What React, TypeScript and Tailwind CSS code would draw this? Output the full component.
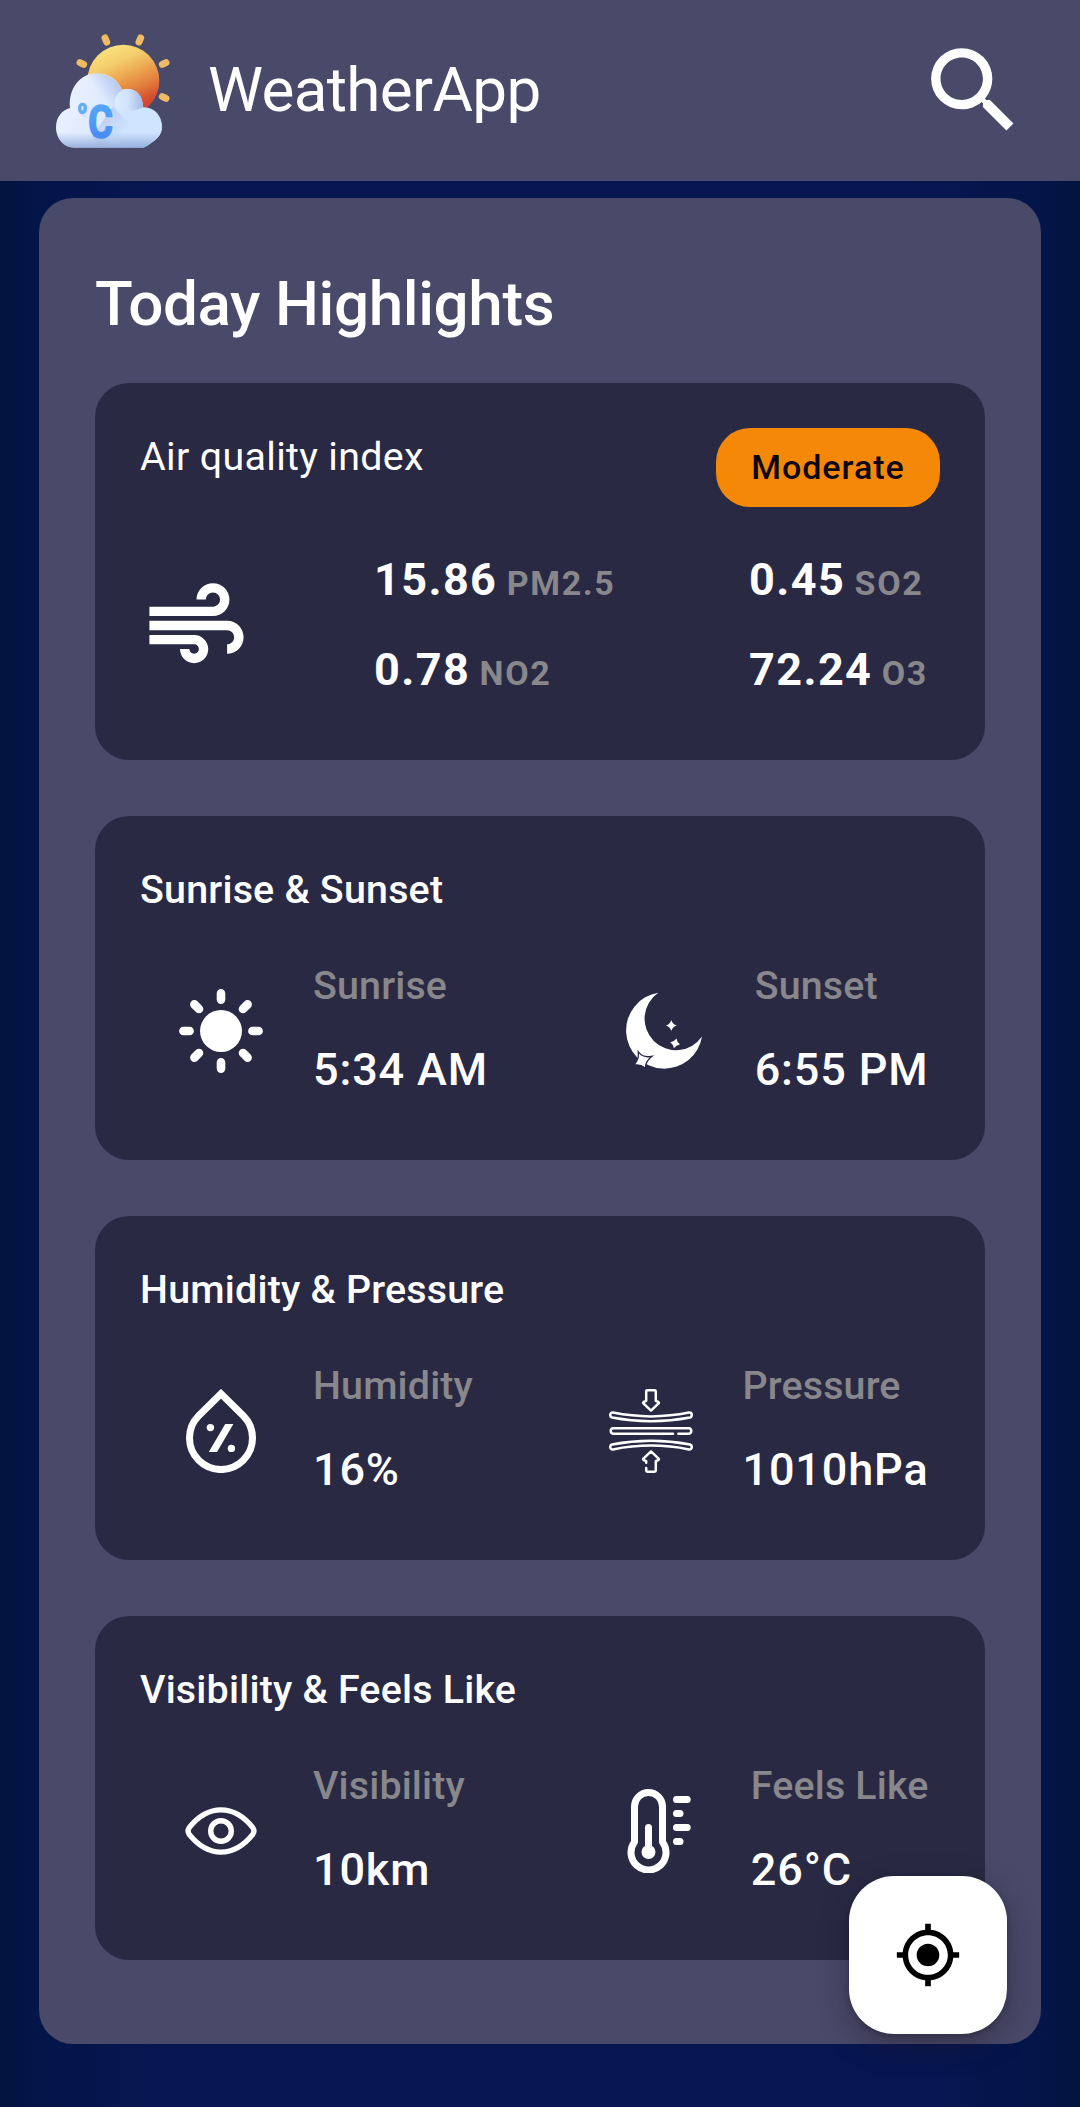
import type { ReactNode } from 'react';
import { MdAir, MdMyLocation, MdSearch } from 'react-icons/md';

function Logo() {
  return (
    <svg className="h-[114px] w-[114px] shrink-0" viewBox="48 40 342 342">
      <defs>
        <linearGradient id="sun" x1="0.2" y1="0.05" x2="0.62" y2="1">
          <stop offset="0" stopColor="#fae47e" />
          <stop offset="0.25" stopColor="#f4cd6c" />
          <stop offset="0.5" stopColor="#eba04a" />
          <stop offset="0.68" stopColor="#e17d3c" />
          <stop offset="0.85" stopColor="#d6502f" />
          <stop offset="1" stopColor="#cf3f2c" />
        </linearGradient>
        <linearGradient id="cloud" x1="0" y1="0" x2="1" y2="0.3">
          <stop offset="0" stopColor="#f0f3ff" />
          <stop offset="0.5" stopColor="#e0ebff" />
          <stop offset="1" stopColor="#c6e2ff" />
        </linearGradient>
        <linearGradient id="lobe" x1="0.55" y1="0.4" x2="0.95" y2="0.1">
          <stop offset="0" stopColor="#aebfe8" stopOpacity="0" />
          <stop offset="1" stopColor="#a3b8e6" stopOpacity="0.85" />
        </linearGradient>
        <linearGradient id="puff" x1="0" y1="0" x2="1" y2="0">
          <stop offset="0" stopColor="#dcebff" />
          <stop offset="0.45" stopColor="#d3e3fb" />
          <stop offset="1" stopColor="#a2b9e8" />
        </linearGradient>
        <linearGradient id="base" x1="0" y1="0" x2="0" y2="1">
          <stop offset="0" stopColor="#9db6e4" stopOpacity="0" />
          <stop offset="1" stopColor="#93acdd" stopOpacity="0.95" />
        </linearGradient>
        <linearGradient id="cast" x1="0" y1="0" x2="0.8" y2="0.6">
          <stop offset="0" stopColor="#9fb3de" stopOpacity="0.75" />
          <stop offset="1" stopColor="#9fb3de" stopOpacity="0" />
        </linearGradient>
        <linearGradient id="degree" x1="0" y1="0" x2="0" y2="1">
          <stop offset="0" stopColor="#58b0f6" />
          <stop offset="1" stopColor="#4582f4" />
        </linearGradient>
        <clipPath id="cloudShape">
          <path d="M103 381C72 381 48 354 48 320C48 290 66 268 90 262C84 205 120 158 170 158C205 158 232 176 246 207C280 198 309 216 309 260C341 258 366 284 366 318C366 345 345 362 311 381Z" />
        </clipPath>
      </defs>
      <g stroke="#f0bb62" strokeWidth="21" strokeLinecap="round">
        <path d="M195 52l5 12M302 52l-5 12M120 126l11 5M378 126l-11 5M378 233l-11-5" />
      </g>
      <circle cx="250" cy="180" r="108" fill="url(#sun)" />
      <g clipPath="url(#cloudShape)">
        <rect x="40" y="150" width="340" height="240" fill="url(#cloud)" />
        <circle cx="170" cy="240" r="82" fill="url(#lobe)" />
        <circle cx="267" cy="247" r="43" fill="url(#puff)" />
        <path d="M309 261a58 58 0 0 1 57 58v40H225v-97c20 18 50 10 84-1z" fill="#cfe4ff" />
        <path d="M218 258L278 318L240 381H184L156 348Z" fill="url(#cast)" />
        <path d="M118 278L150 304V262L140 250Z" fill="url(#cast)" />
        <rect x="40" y="334" width="340" height="48" fill="url(#base)" />
      </g>
      <rect x="119.5" y="251" width="16" height="24" rx="8" fill="none" stroke="#62aef5" strokeWidth="10" />
      <text
        transform="translate(145 352) scale(.82 1)"
        fontFamily="Roboto, sans-serif"
        fontWeight="700"
        fontSize="138"
        fill="url(#degree)"
        stroke="url(#degree)"
        strokeWidth="5"
        strokeLinejoin="round"
      >
        C
      </text>
    </svg>
  );
}

const icon = 'h-[84px] w-[84px] shrink-0';

function SunIcon() {
  return (
    <svg className={icon} viewBox="0 0 84 84" fill="#fff">
      <circle cx="42" cy="42" r="21" />
      <path
        d="M42 4.4v6.2M42 73.4v6.2M4.4 42h6.2M73.4 42h6.2M15.4 15.4l4.6 4.6M64 64l4.6 4.6M68.6 15.4L64 20M20 64l-4.6 4.6"
        stroke="#fff"
        strokeWidth="8.6"
        strokeLinecap="round"
      />
    </svg>
  );
}

function MoonIcon() {
  return (
    <svg className={icon} viewBox="0 0 84 84" fill="#fff">
      <path d="M37.3 3.7A38.2 38.2 0 1 0 81 47.6A31.5 31.5 0 1 1 37.3 3.7z" />
      <path d="M50.3 31Q51.5 35.3 55.8 36.5Q51.5 37.7 50.3 42Q49.1 37.7 44.8 36.5Q49.1 35.3 50.3 31z" />
      <g stroke="#292944" strokeWidth="1.9" paintOrder="stroke">
        <path d="M55.5 49.4Q56 53.1 58.9 55.2Q55.2 56 52.9 59.2Q52.4 55.6 49.3 53.3Q53.1 52.7 55.5 49.4z" />
      </g>
      <g stroke="#292944" strokeWidth="2.6" paintOrder="stroke">
        <path d="M18 64.6Q22 69.2 28.9 68.2Q24.2 72.2 23.8 78Q20 74.6 14.2 75.3Q18.4 71 18 64.6z" />
      </g>
    </svg>
  );
}

function HumidityIcon() {
  return (
    <svg className={icon} viewBox="0 0 84 84" fill="#fff">
      <path d="M42 4.8L19.7 26.8A31.5 31.5 0 1 0 64.3 26.8Z" fill="none" stroke="#fff" strokeWidth="7" />
      <circle cx="31.4" cy="38.6" r="3.7" />
      <circle cx="52.4" cy="59.4" r="3.7" />
      <path d="M46.2 35h8.2L38 63h-8.2z" />
    </svg>
  );
}

function PressureIcon() {
  return (
    <svg
      className={icon}
      viewBox="0 0 84 84"
      fill="none"
      stroke="#fff"
      strokeWidth="2.5"
      strokeLinecap="round"
      strokeLinejoin="round"
    >
      <path d="M38.4 1.3h7.2q1.2 0 1.2 1.2v9.3l2.6 1.2q.9.6.2 1.4L42 21.7l-7.6-7.3q-.7-.8.2-1.4l2.6-1.2V2.5q0-1.2 1.2-1.2z" />
      <path d="M4 23.6Q42 31.2 80 23.6Q82.6 23.4 82.8 26Q82.8 28 81 28.5Q42 36 3 28.5Q1.2 28 1.2 26Q1.4 23.4 4 23.6z" />
      <path d="M64 44.7H3.8a2.8 2.8 0 0 1 0-5.4H80.2a2.8 2.8 0 0 1 0 5.4H69.4" />
      <path d="M4 60.4Q42 52.8 80 60.4Q82.6 60.6 82.8 58Q82.8 56 81 55.5Q42 48 3 55.5Q1.2 56 1.2 58Q1.4 60.6 4 60.4z" />
      <path d="M37.2 73.8v-1.6l-2.6-1.2q-.9-.6-.2-1.4L42 62.3l7.6 7.3q.7.8-.2 1.4l-2.6 1.2v9.3q0 1.2-1.2 1.2h-7.2q-1.2 0-1.2-1.2v-2.6" />
    </svg>
  );
}

function EyeIcon() {
  return (
    <svg className={icon} viewBox="0 0 84 84" fill="none" stroke="#fff" strokeWidth="5.4">
      <path d="M10.2 38.6C17.5 29.5 28.5 20.9 42 20.9S66.5 29.5 73.8 38.6Q76 42 73.8 45.4C66.5 54.5 55.5 63.1 42 63.1S17.5 54.5 10.2 45.4Q8 42 10.2 38.6z" />
      <circle cx="42" cy="42" r="10.3" />
    </svg>
  );
}

function ThermometerIcon() {
  return (
    <svg
      className={icon}
      viewBox="0 0 84 84"
      fill="none"
      stroke="#fff"
      strokeWidth="7"
      strokeLinecap="round"
      strokeLinejoin="round"
    >
      <path d="M17.5 53V17.5a14 14 0 0 1 28 0V53A17.5 17.5 0 1 1 17.5 53z" />
      <path d="M31.5 38.5V63M59.5 10.5h10.7M59.5 24.5h3.5M59.5 38.5h10.7M59.5 52.5h3.5" />
      <circle cx="31.5" cy="63" r="3.5" />
    </svg>
  );
}

function Reading({ icon, label, value }: { icon: ReactNode; label: string; value: string }) {
  return (
    <div className="flex items-center gap-[50px]">
      {icon}
      <div className="flex flex-col gap-[23px] pb-[3px] font-medium">
        <span className="text-[39.4px] leading-[57px] tracking-[0.15px] text-[#88878b]">{label}</span>
        <span className="text-[45px] leading-[65px] tracking-[0.85px]">{value}</span>
      </div>
    </div>
  );
}

function Pollutant({ value, name }: { value: string; name: string }) {
  return (
    <div className="flex h-[90px] items-baseline gap-[9.5px] leading-[90px]">
      <span className="text-[45px] font-bold tracking-[1.4px]">{value}</span>
      <span className="text-[34px] font-bold tracking-[1.6px] text-[#88878b]">{name}</span>
    </div>
  );
}

function Card({ title, children }: { title: string; children: ReactNode }) {
  return (
    <section className="h-[344px] rounded-[34px] bg-[#292944] px-[45px] pt-[45px]">
      <h2 className="text-[39.4px] leading-[57px] font-medium tracking-[0.2px]">{title}</h2>
      <div className="mt-[29px] flex h-[168px] items-center justify-between pr-[11.5px] pl-[39px]">{children}</div>
    </section>
  );
}

export default function App() {
  return (
    <div className="relative h-[2107px] w-[1080px] overflow-hidden bg-[linear-gradient(90deg,#02143f_0%,#04154a_4%,#071650_16%,#071650_84%,#04154a_96%,#02143f_100%)] font-[Roboto,sans-serif] text-white">
      <header className="flex h-[181px] items-center bg-[#494969] pr-[50px] pl-[56px]">
        <Logo />
        <h1 className="ml-[38px] pb-[2px] text-[62px] leading-[73px] tracking-[-0.65px]">WeatherApp</h1>
        <MdSearch className="ml-auto h-[113px] w-[113px]" />
      </header>

      <main className="mx-[39px] mt-[17px] h-[1846px] rounded-[34px] bg-[#494969] px-[56px] pt-[69px]">
        <h2 className="text-[62px] leading-[73px] font-medium tracking-[-0.4px]">Today Highlights</h2>

        <div className="mt-[43px] flex flex-col gap-[56px]">
          <section className="h-[377px] rounded-[34px] bg-[#292944] p-[45px]">
            <div className="flex h-[79px] items-start justify-between">
              <h3 className="text-[39.4px] leading-[57px] tracking-[0.33px]">Air quality index</h3>
              <span className="flex h-[79px] w-[224px] items-center justify-center rounded-[34px] bg-[#f58907] text-[34px] font-medium tracking-[1px] text-[#0c0410]">
                Moderate
              </span>
            </div>
            <div className="mt-[28px] flex items-center">
              <MdAir className="h-[113px] w-[113px]" />
              <div className="ml-[121px] w-[375px]">
                <Pollutant value="15.86" name="PM2.5" />
                <Pollutant value="0.78" name="NO2" />
              </div>
              <div>
                <Pollutant value="0.45" name="SO2" />
                <Pollutant value="72.24" name="O3" />
              </div>
            </div>
          </section>

          <Card title="Sunrise & Sunset">
            <Reading icon={<SunIcon />} label="Sunrise" value="5:34 AM" />
            <Reading icon={<MoonIcon />} label="Sunset" value="6:55 PM" />
          </Card>
          <Card title="Humidity & Pressure">
            <Reading icon={<HumidityIcon />} label="Humidity" value="16%" />
            <Reading icon={<PressureIcon />} label="Pressure" value="1010hPa" />
          </Card>
          <Card title="Visibility & Feels Like">
            <Reading icon={<EyeIcon />} label="Visibility" value="10km" />
            <Reading icon={<ThermometerIcon />} label="Feels Like" value="26°C" />
          </Card>
        </div>
      </main>

      <button
        aria-label="Current location"
        className="absolute right-[73px] bottom-[73px] flex h-[158px] w-[158px] items-center justify-center rounded-[45px] bg-white text-black shadow-[0_10px_30px_rgba(30,20,35,0.4),0_2px_6px_rgba(0,0,0,0.2)]"
      >
        <MdMyLocation className="h-[68px] w-[68px]" />
      </button>
    </div>
  );
}
